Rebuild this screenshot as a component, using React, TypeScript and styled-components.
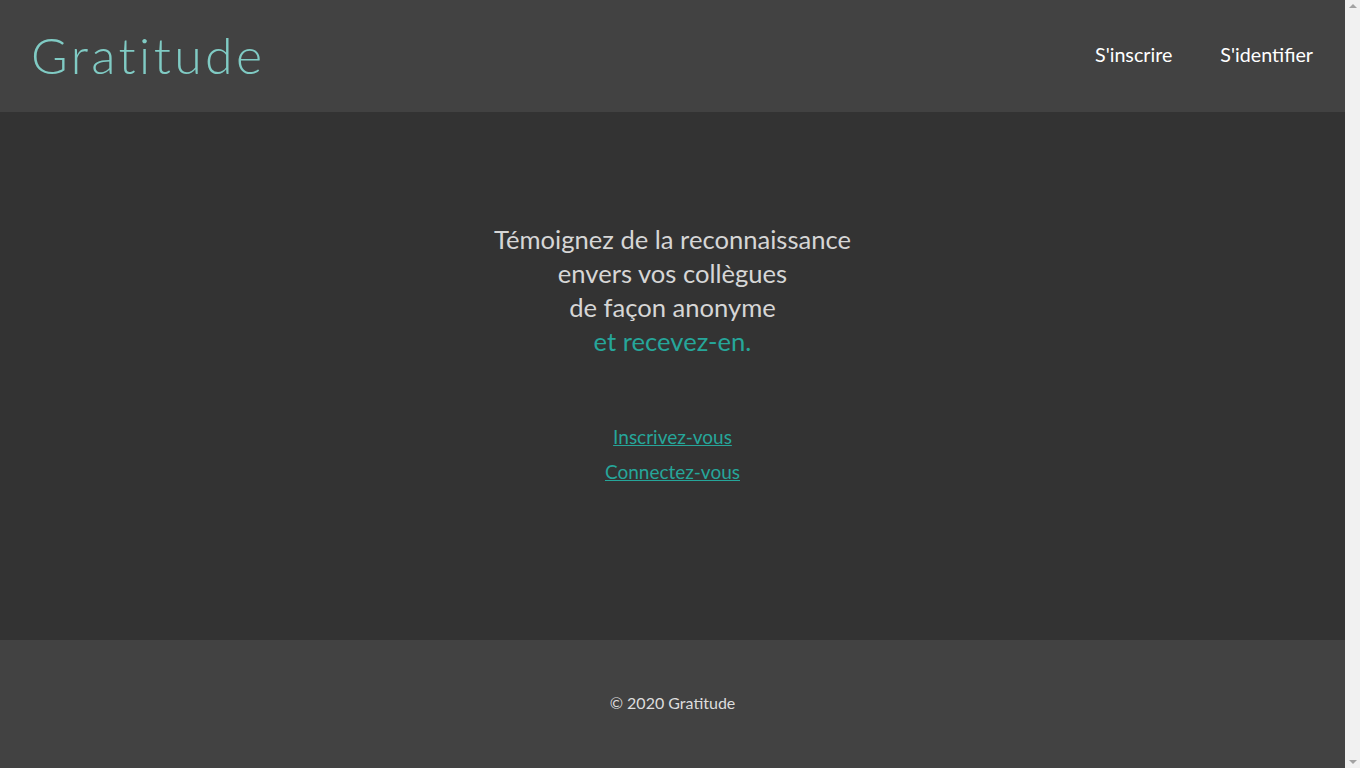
import React from "react";
import styled, { createGlobalStyle } from "styled-components";

const Global = createGlobalStyle`
  body { margin: 0; font-family: "Lato", "Noto Sans", sans-serif; background: #333333; overflow: hidden; }
`;

const Window = styled.div`
  display: flex;
  height: 768px;
`;

const Page = styled.div`
  flex: 1;
  display: flex;
  flex-direction: column;
  min-width: 0;
`;

const Scrollbar = styled.div`
  width: 15px;
  background: #f1f1f1;
  display: flex;
  flex-direction: column;
  justify-content: space-between;
  align-items: center;
  padding: 4px 0;
  box-sizing: border-box;
`;

const Arrow = styled.div<{ $down?: boolean }>`
  width: 0;
  height: 0;
  border-left: 4px solid transparent;
  border-right: 4px solid transparent;
  ${(p) => (p.$down ? "border-top: 4px solid #a3a3a3;" : "border-bottom: 4px solid #a3a3a3;")}
`;

const Header = styled.header`
  height: 112px;
  background: #424242;
  display: flex;
  align-items: center;
  justify-content: space-between;
  padding: 0 32px 0 31px;
  box-sizing: border-box;
`;

const Logo = styled.a`
  font-family: "Lato", sans-serif;
  font-weight: 300;
  font-size: 50px;
  letter-spacing: 3.4px;
  color: #80cbc4;
  text-decoration: none;
  line-height: 1;
  margin-top: -3px;
`;

const Nav = styled.nav`
  display: flex;
  gap: 48px;
  margin-top: -3px;
`;

const NavLink = styled.a`
  color: #ffffff;
  font-family: "Lato", sans-serif;
  font-size: 19.7px;
  text-decoration: none;
`;

const Main = styled.main`
  height: 528px;
  background: #333333;
  display: flex;
  flex-direction: column;
  align-items: center;
  padding-top: 110px;
  box-sizing: border-box;
`;

const Hero = styled.h2`
  margin: 0;
  font-family: "Lato", sans-serif;
  font-weight: 400;
  font-size: 25.6px;
  line-height: 34px;
  color: #d6d6d6;
  text-align: center;
`;

const Accent = styled.span`
  color: #26a69a;
`;

const Links = styled.div`
  margin-top: 67px;
  display: flex;
  flex-direction: column;
  align-items: center;
  gap: 12px;
`;

const CtaLink = styled.a`
  font-family: "Lato", sans-serif;
  font-size: 19px;
  line-height: 23px;
  color: #26a69a;
  text-decoration: underline;
`;

const Footer = styled.footer`
  height: 128px;
  background: #424242;
  display: flex;
  align-items: center;
  justify-content: center;
  padding-bottom: 4px;
  box-sizing: border-box;
`;

const Copy = styled.p`
  margin: 0;
  font-family: "Lato", sans-serif;
  font-size: 16px;
  color: #dddddd;
`;

export default function App() {
  return (
    <Window>
      <Global />
      <Page>
        <Header>
          <Logo href="#">Gratitude</Logo>
          <Nav>
            <NavLink href="#">S'inscrire</NavLink>
            <NavLink href="#">S'identifier</NavLink>
          </Nav>
        </Header>
        <Main>
          <Hero>
            Témoignez de la reconnaissance
            <br />
            envers vos collègues
            <br />
            de façon anonyme
            <br />
            <Accent>et recevez-en.</Accent>
          </Hero>
          <Links>
            <CtaLink href="#">Inscrivez-vous</CtaLink>
            <CtaLink href="#">Connectez-vous</CtaLink>
          </Links>
        </Main>
        <Footer>
          <Copy>© 2020 Gratitude</Copy>
        </Footer>
      </Page>
      <Scrollbar>
        <Arrow />
        <Arrow $down />
      </Scrollbar>
    </Window>
  );
}
